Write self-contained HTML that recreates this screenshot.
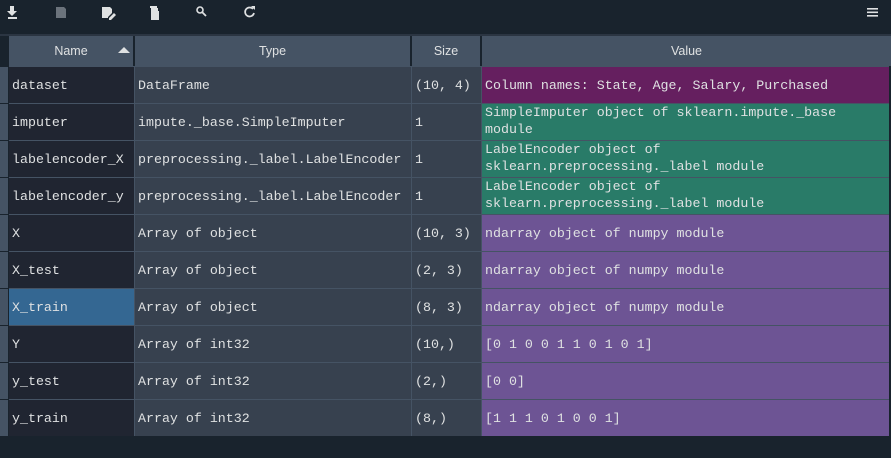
<!DOCTYPE html><html><head><style>
body{margin:0;width:891px;height:458px;background:#19232d;overflow:hidden;font-family:"Liberation Mono",monospace;position:relative}
.c{position:absolute;box-sizing:border-box;color:#dfe1e2;font-size:13.3px;line-height:17px;padding-left:3px;display:flex;align-items:center;white-space:pre}
.h{position:absolute;background:#455364;color:#dfe1e2;font-family:"Liberation Sans",sans-serif;font-size:12.5px;display:flex;align-items:center;justify-content:center;top:36px;height:30px;box-sizing:border-box}
.g{position:absolute;left:0;width:8px;background:#455364}
svg{position:absolute}
</style></head><body>
<svg x="0" y="0" width="891" height="34" style="left:0;top:0">
<g fill="#dfe1e2">
<path d="M10 6h4v5h3l-5 5-5-5h3z"/><rect x="8" y="17" width="9" height="2"/>
<path d="M56 7h8l2 2v9h-10z" fill="#6b737c"/>
<path d="M102 7h8l2 2v4l-4 4v1h-6z"/><path d="M109 18l5-5 2 2-5 5h-2z"/>
<path d="M151 8h7v3h1v9h-8z"/><rect x="150" y="6" width="7" height="2"/>
<circle cx="200" cy="10" r="3" fill="none" stroke="#dfe1e2" stroke-width="1.6"/><path d="M202 12l4 4" stroke="#dfe1e2" stroke-width="1.8"/>
<path d="M253 9a4.5 4.5 0 1 0 1 4" fill="none" stroke="#dfe1e2" stroke-width="1.7"/><path d="M251 6h4v4z"/>
<rect x="867" y="8" width="11" height="1.6"/><rect x="867" y="11.5" width="11" height="1.6"/><rect x="867" y="15" width="11" height="1.6"/>
</g></svg>
<div style="position:absolute;left:0;top:34px;width:891px;height:2px;background:#2b3542"></div>
<div class="g" style="top:36px;height:30px;background:#19232d"></div>
<div class="h" style="left:9px;width:125px;border-right:1px solid #19232d">Name<span style="position:absolute;right:3px;top:11px;width:0;height:0;border-left:6px solid transparent;border-right:6px solid transparent;border-bottom:6px solid #dfe1e2"></span></div>
<div class="h" style="left:135px;width:276px;border-right:1px solid #19232d">Type</div>
<div class="h" style="left:412px;width:69px;border-right:1px solid #19232d">Size</div>
<div class="h" style="left:482px;width:409px">Value</div>
<div id="rows"></div>
<script>
var d=[["dataset","DataFrame","(10, 4)","Column names: State, Age, Salary, Purchased","#651f5f"],
["imputer","impute._base.SimpleImputer","1","SimpleImputer object of sklearn.impute._base\nmodule","#297b68"],
["labelencoder_X","preprocessing._label.LabelEncoder","1","LabelEncoder object of\nsklearn.preprocessing._label module","#297b68"],
["labelencoder_y","preprocessing._label.LabelEncoder","1","LabelEncoder object of\nsklearn.preprocessing._label module","#297b68"],
["X","Array of object","(10, 3)","ndarray object of numpy module","#6d5494"],
["X_test","Array of object","(2, 3)","ndarray object of numpy module","#6d5494"],
["X_train","Array of object","(8, 3)","ndarray object of numpy module","#6d5494"],
["Y","Array of int32","(10,)","[0 1 0 0 1 1 0 1 0 1]","#6d5494"],
["y_test","Array of int32","(2,)","[0 0]","#6d5494"],
["y_train","Array of int32","(8,)","[1 1 1 0 1 0 0 1]","#6d5494"]];
var h="";d.forEach(function(r,i){var y=66+i*37;var H=36;
h+='<div class="g" style="top:'+(y+1)+'px;height:'+H+'px"></div>';
h+='<div class="c" style="left:9px;top:'+(y+1)+'px;width:125px;height:'+H+'px;background:'+(i==6?'#346792':'#202531')+'">'+r[0]+'</div>';
h+='<div class="c" style="left:135px;top:'+(y+1)+'px;width:276px;height:'+H+'px;background:#37414f">'+r[1]+'</div>';
h+='<div class="c" style="left:412px;top:'+(y+1)+'px;width:69px;height:'+H+'px;background:#37414f">'+r[2]+'</div>';
h+='<div class="c" style="left:482px;top:'+(y+1)+'px;width:407px;height:'+H+'px;background:'+r[4]+';align-items:'+(r[3].indexOf("\n")>=0?'flex-start':'center')+'">'+r[3]+'</div>';});
h+='<div style="position:absolute;left:9px;top:66px;width:880px;height:370px;z-index:-1;background:#455364"></div>';
document.getElementById("rows").innerHTML=h;
</script>
</body></html>
